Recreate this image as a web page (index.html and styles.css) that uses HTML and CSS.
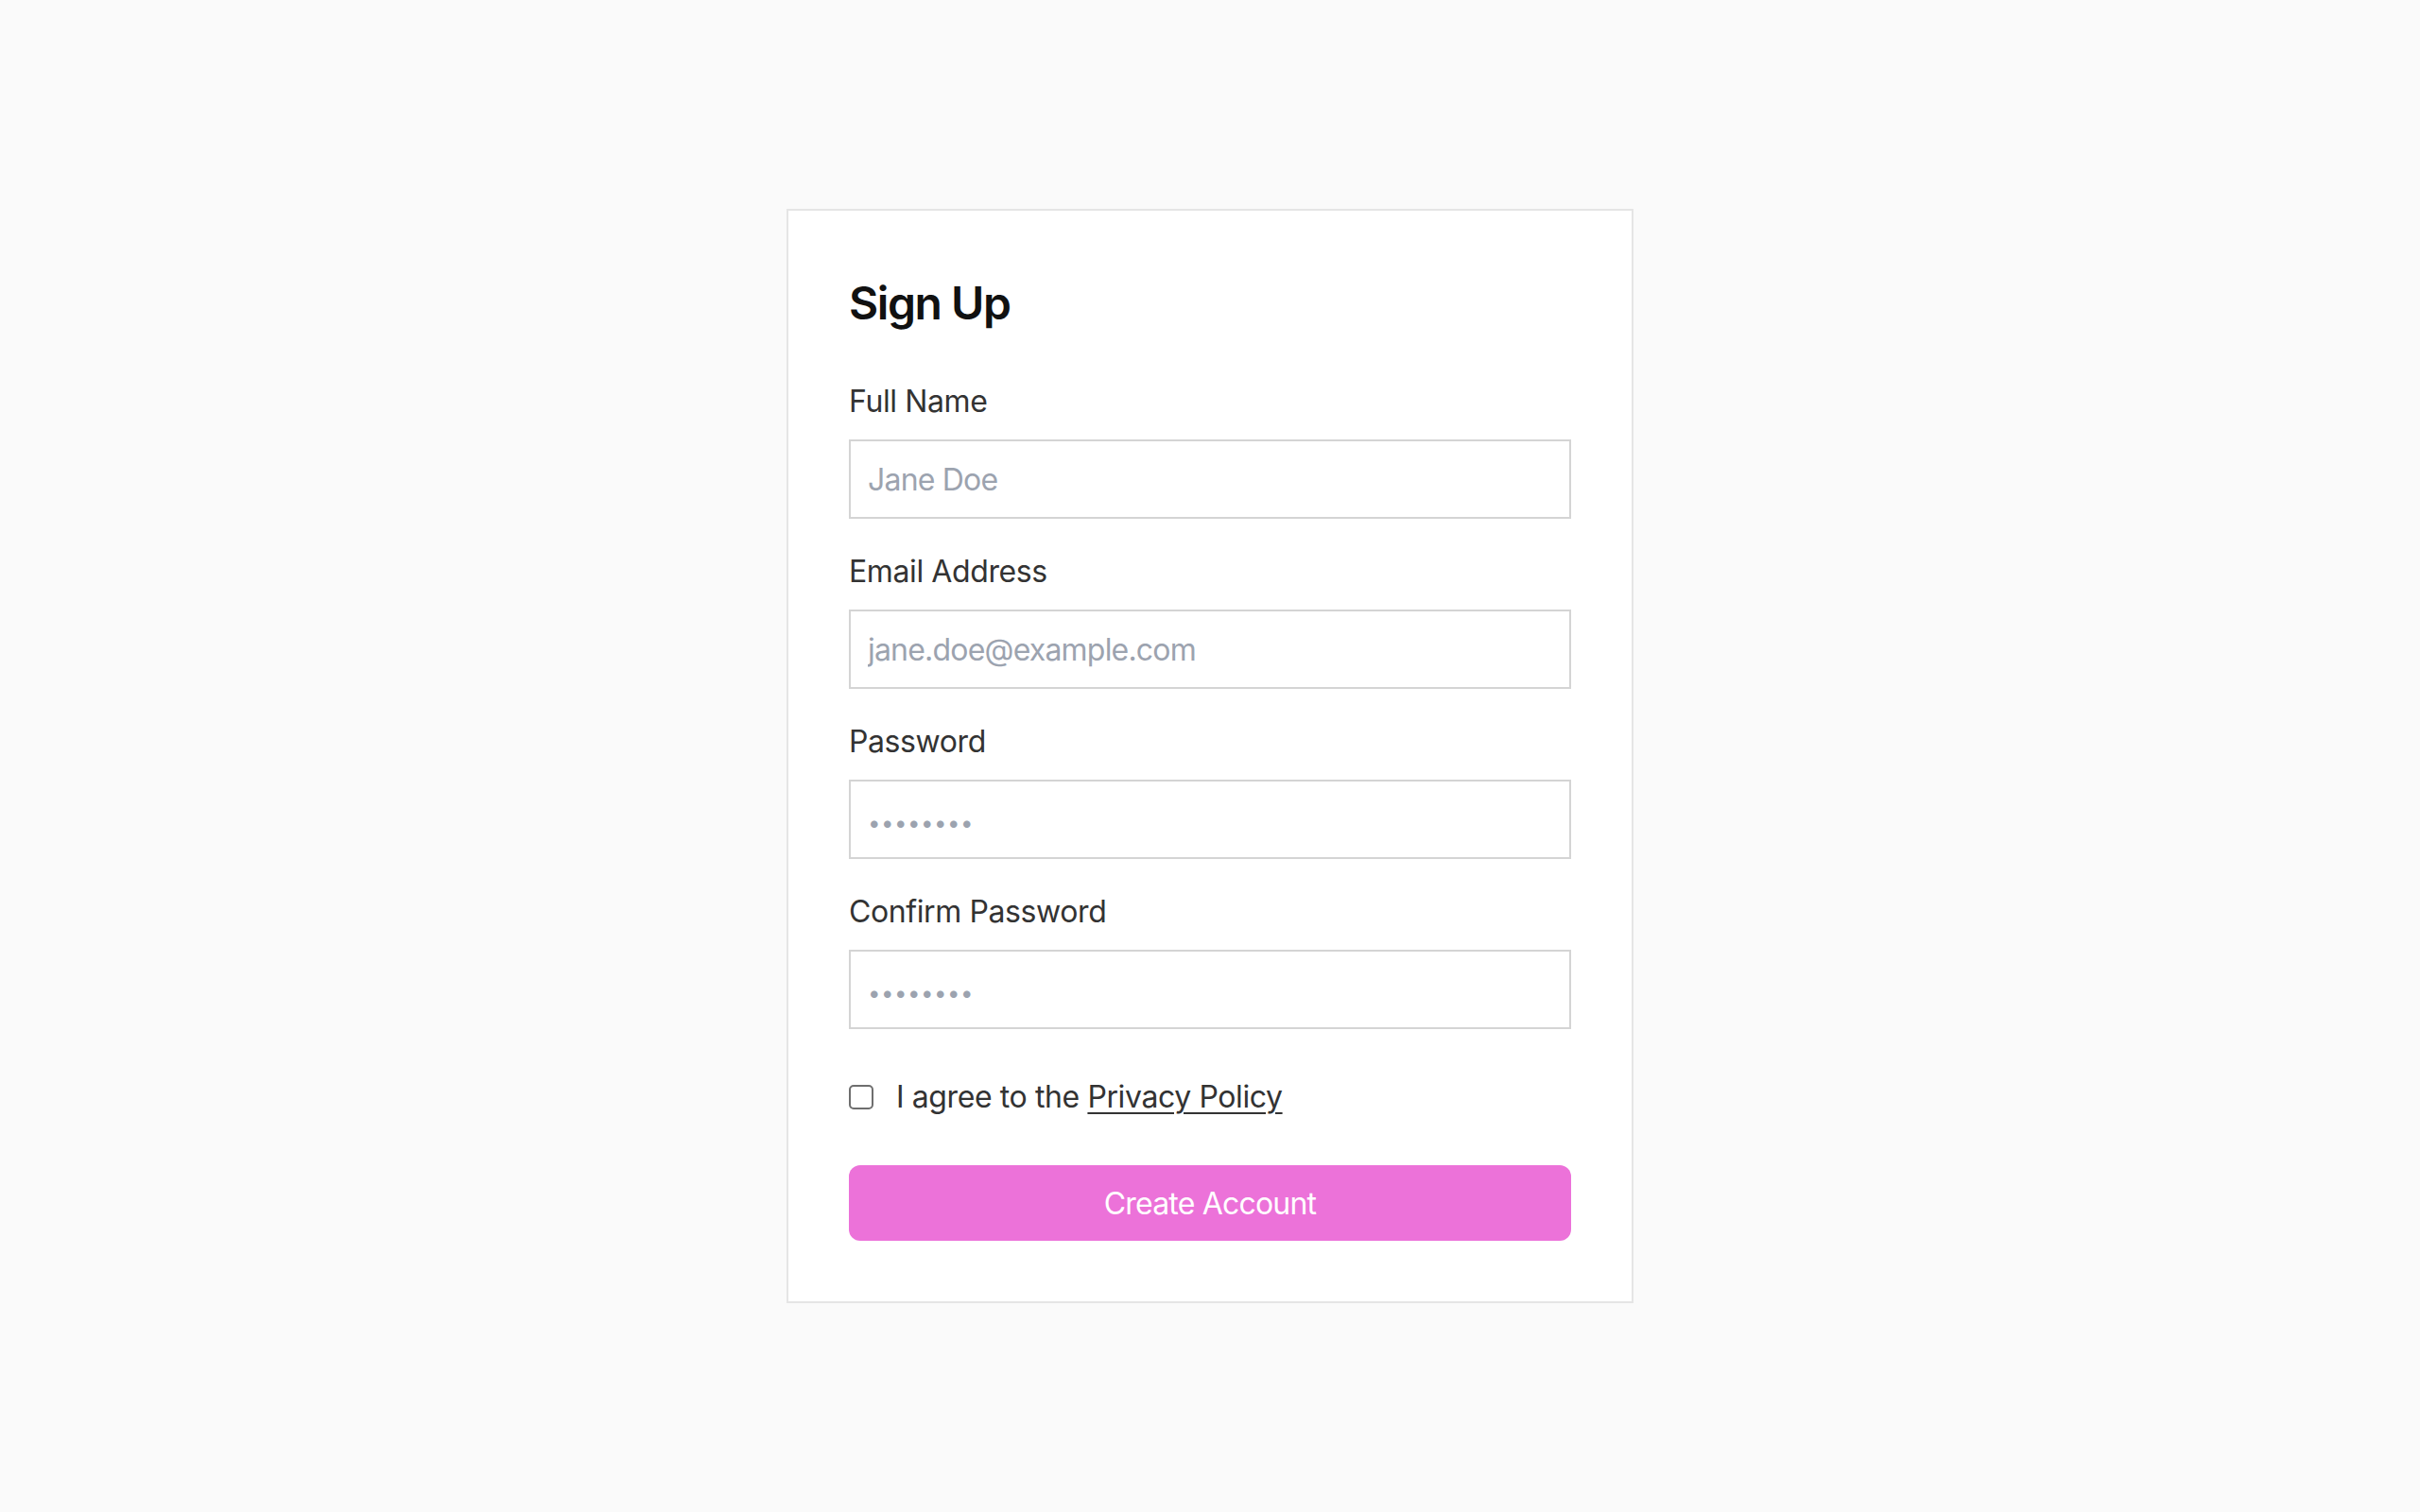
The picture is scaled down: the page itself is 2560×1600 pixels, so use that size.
FILE: index.html
```html
<!DOCTYPE html>
<html lang="en">
<head>
    <meta charset="UTF-8">
    <title>Sign Up</title>
    <link rel="stylesheet" href="styles.css">
</head>
<body>
<div class="page">
    <form class="card">
        <h1>Sign Up</h1>
        <div class="field">
            <label for="name">Full Name</label>
            <input type="text" id="name" placeholder="Jane Doe">
        </div>
        <div class="field">
            <label for="email">Email Address</label>
            <input type="email" id="email" placeholder="jane.doe@example.com">
        </div>
        <div class="field">
            <label for="pass">Password</label>
            <input type="password" id="pass" placeholder="••••••••">
        </div>
        <div class="field">
            <label for="pass2">Confirm Password</label>
            <input type="password" id="pass2" placeholder="••••••••">
        </div>
        <label class="agree">
            <input type="checkbox">
            <span>I agree to the <a href="javascript://">Privacy Policy</a></span>
        </label>
        <button type="button" class="submit">Create Account</button>
    </form>
</div>
</body>
</html>
```

FILE: styles.css
```css
body,h1,form,label,input,button{
    margin: 0;
    padding: 0;
}
body{
    background-color: #fafafa;
    font-family: Inter, "Noto Sans", sans-serif;
    letter-spacing: -0.025em;
    color: #333;
}
.page{
    display: flex;
    align-items: center;
    justify-content: center;
    min-height: 100vh;
}
.card{
    width: 896px;
    box-sizing: border-box;
    padding: 64px;
    background-color: #fff;
    border: 2px solid #e5e5e5;
}
h1{
    font-size: 48px;
    line-height: 68px;
    font-weight: 600;
    letter-spacing: -0.03em;
    color: #111;
    margin-bottom: 46px;
}
.field{
    margin-bottom: 32px;
}
.field label{
    display: block;
    font-size: 32px;
    line-height: 48px;
    margin-bottom: 16px;
}
.field input{
    display: block;
    width: 100%;
    height: 84px;
    box-sizing: border-box;
    padding: 0 18px;
    border: 2px solid #d4d4d4;
    border-radius: 0;
    font-family: inherit;
    font-size: 32px;
    letter-spacing: -0.025em;
    color: #333;
    background-color: #fff;
    outline: none;
}
.field input::placeholder{
    color: #9ca3af;
}
.field input[type=password]::placeholder{
    font-size: 24px;
    letter-spacing: 0.5px;
}
.agree{
    display: flex;
    align-items: center;
    gap: 24px;
    margin-top: 48px;
    font-size: 32px;
    line-height: 48px;
}
.agree input{
    appearance: none;
    width: 26px;
    height: 26px;
    box-sizing: border-box;
    border: 2px solid #6e6e6e;
    border-radius: 5px;
    background-color: #fff;
}
.agree a{
    color: #333;
    text-decoration: underline;
    text-decoration-thickness: 2px;
    text-underline-offset: 5px;
}
.submit{
    display: block;
    width: 100%;
    height: 80px;
    margin-top: 48px;
    border: none;
    border-radius: 12px;
    background-color: #ec72d9;
    color: #fff;
    font-family: inherit;
    font-size: 32px;
    letter-spacing: -0.025em;
    cursor: pointer;
}
```
